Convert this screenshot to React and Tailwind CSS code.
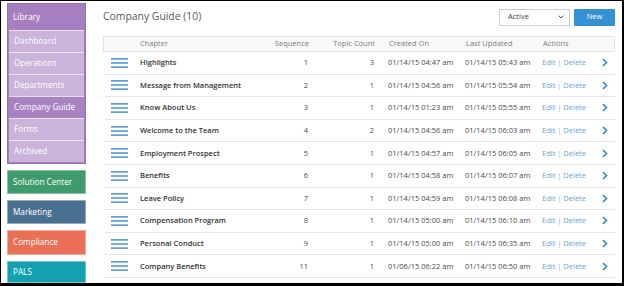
import React from 'react';

const libraryItems = ['Dashboard', 'Operations', 'Departments', 'Company Guide', 'Forms', 'Archived'];

const sections = [
  { name: 'Solution Center', cls: 'bg-[#3f9b6c] h-[26px]' },
  { name: 'Marketing', cls: 'bg-[#4a7091] h-[26px]' },
  { name: 'Compliance', cls: 'bg-[#e96f56] h-[26px]' },
  { name: 'PALS', cls: 'bg-[#14a0b1] h-[24px]' },
];

const rows = [
  ['Highlights', 1, 3, '01/14/15 04:47 am', '01/14/15 05:43 am'],
  ['Message from Management', 2, 1, '01/14/15 04:56 am', '01/14/15 05:54 am'],
  ['Know About Us', 3, 1, '01/14/15 01:23 am', '01/14/15 05:55 am'],
  ['Welcome to the Team', 4, 2, '01/14/15 04:56 am', '01/14/15 06:03 am'],
  ['Employment Prospect', 5, 1, '01/14/15 04:57 am', '01/14/15 06:05 am'],
  ['Benefits', 6, 1, '01/14/15 04:58 am', '01/14/15 06:07 am'],
  ['Leave Policy', 7, 1, '01/14/15 04:59 am', '01/14/15 06:08 am'],
  ['Compensation Program', 8, 1, '01/14/15 05:00 am', '01/14/15 06:10 am'],
  ['Personal Conduct', 9, 1, '01/14/15 05:00 am', '01/14/15 06:35 am'],
  ['Company Benefits', 11, 1, '01/06/15 06:22 am', '01/14/15 06:50 am'],
];

const cols = 'grid grid-cols-[32px_119px_54px_66px_91px_77px_52px_21px] items-center';

function Hamburger() {
  return (
    <svg width="17" height="10" viewBox="0 0 17 10">
      <rect x="0" y="0" width="17" height="1.7" fill="#5f9fdb" />
      <rect x="0" y="4.15" width="17" height="1.7" fill="#5f9fdb" />
      <rect x="0" y="8.3" width="17" height="1.7" fill="#5f9fdb" />
    </svg>
  );
}

function Chevron() {
  return (
    <svg width="6" height="9" viewBox="0 0 6 9">
      <path d="M1 1 L4.5 4.5 L1 8" fill="none" stroke="#2d8ad4" strokeWidth="1.6" />
    </svg>
  );
}

export default function App() {
  return (
    <div className="w-[624px] h-[286px] overflow-hidden bg-white border-t border-l border-r-2 border-b-[3px] border-black flex font-['Open_Sans',sans-serif]">
      {/* sidebar */}
      <div className="w-[79px] ml-[6px] mt-[2px] flex flex-col gap-[6px] shrink-0">
        <div className="bg-[#a67fc1] border border-[#9a70b7] px-[1px] pb-[1px]">
          <div className="h-[26px] flex items-center pl-[4px] text-[8.3px] text-white">Library</div>
          {libraryItems.map(item => (
            <div
              key={item}
              className={
                item === 'Company Guide'
                  ? 'h-[22px] flex items-center pl-[5px] text-[8.2px] text-white border-t border-[#e9def0] bg-[#a883c2]'
                  : 'h-[22px] flex items-center pl-[5px] text-[8.2px] text-white border-t border-[#ece4f2] bg-[#cab4da]'
              }
            >
              {item}
            </div>
          ))}
        </div>
        {sections.map(s => (
          <div key={s.name} className={`${s.cls} flex items-center pl-[5px] text-[8.2px] text-white border border-white/40`}>
            {s.name}
          </div>
        ))}
      </div>

      {/* main */}
      <div className="ml-[17px] w-[512px] flex flex-col">
        <div className="flex items-center justify-between mt-[7px] h-[18px]">
          <div className="text-[10.4px] text-[#5a5a5a]">Company Guide (10)</div>
          <div className="flex items-center gap-[4px]">
            <div className="w-[71px] h-[17px] border border-[#cfcfcf] bg-white flex items-center justify-between pl-[8px] pr-[5px] text-[7.5px] text-[#444]">
              <span>Active</span>
              <svg width="6" height="4" viewBox="0 0 6 4">
                <path d="M0.5 0.5 L3 3 L5.5 0.5" fill="none" stroke="#555" strokeWidth="1" />
              </svg>
            </div>
            <div className="w-[41px] h-[17px] bg-[#3592d2] rounded-[1px] flex items-center justify-center text-[7.5px] text-white">New</div>
          </div>
        </div>

        <div className={`${cols} mt-[10px] h-[16px] bg-[#f8f8f8] border border-[#e2e2e2] text-[7.5px] text-[#7a7a7a]`}>
          <div />
          <div className="pl-[4px]">Chapter</div>
          <div className="text-right">Sequence</div>
          <div className="text-right">Topic Count</div>
          <div className="pl-[14px]">Created On</div>
          <div>Last Updated</div>
          <div>Actions</div>
          <div />
        </div>

        {rows.map(r => (
          <div key={r[0]} className={`${cols} h-[22.6px] border-b border-[#e6e6e6] text-[7.5px] text-[#4a4a4a]`}>
            <div className="pl-[8px] flex items-center"><Hamburger /></div>
            <div className="pl-[5px] font-semibold text-[#333]">{r[0]}</div>
            <div className="text-right">{r[1]}</div>
            <div className="text-right">{r[2]}</div>
            <div className="pl-[14px]">{r[3]}</div>
            <div>{r[4]}</div>
            <div className="text-[#6ba3d6]">
              Edit <span className="text-[#aaa]">|</span> Delete
            </div>
            <div className="pl-[8px] flex items-center"><Chevron /></div>
          </div>
        ))}
      </div>
    </div>
  );
}
